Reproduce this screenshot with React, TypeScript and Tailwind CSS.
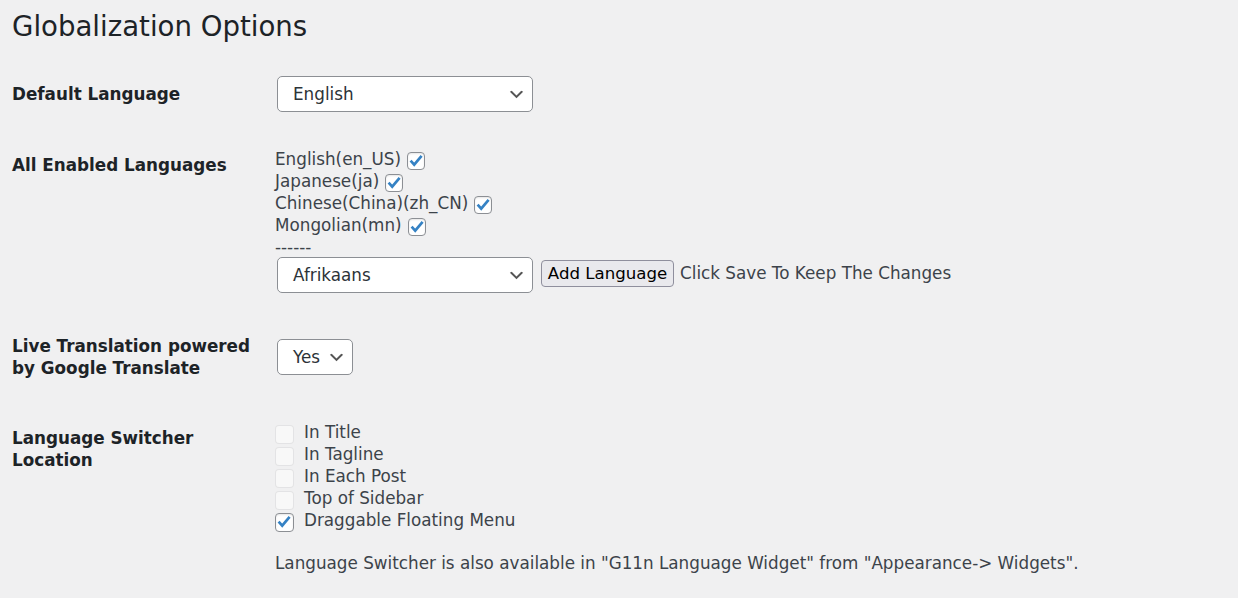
import React from "react";

function Chevron() {
  return (
    <svg width="19" height="19" viewBox="0 0 20 20" className="shrink-0">
      <path d="M5 6l5 5 5-5 2 1-7 7-7-7 2-1z" fill="#555" />
    </svg>
  );
}

function Select({ label, wide }: { label: string; wide: boolean }) {
  return (
    <div
      className={
        wide
          ? "ml-[2px] flex h-[36px] w-[256px] shrink-0 items-center justify-between rounded-[5px] border border-[#8c8f94] bg-white pl-[15px] pr-[6px] text-[#2c3338]"
          : "ml-[2px] flex h-[36px] w-[76px] shrink-0 items-center justify-between rounded-[5px] border border-[#8c8f94] bg-white pl-[15px] pr-[6px] text-[#2c3338]"
      }
    >
      <span>{label}</span>
      <Chevron />
    </div>
  );
}

function Check() {
  return (
    <svg viewBox="0 0 18 18" className="-ml-px -mt-px h-[18px] w-[18px] shrink-0 overflow-visible">
      <path d="M3.6 8.6 L7.2 12.6 L14.6 3.8" fill="none" stroke="#3582c4" strokeWidth="2.7" strokeLinecap="butt" strokeLinejoin="miter" />
    </svg>
  );
}

function LangBox() {
  return (
    <span className="ml-[6px] mt-[4px] flex h-[18px] w-[18px] shrink-0 items-start overflow-visible rounded-[4px] border border-[#8c8f94] bg-white shadow-[inset_0_1px_2px_rgba(0,0,0,0.1)]">
      <Check />
    </span>
  );
}

function SwitchBox({ checked }: { checked: boolean }) {
  return checked ? (
    <span className="mt-[4px] flex h-[19px] w-[19px] shrink-0 items-start overflow-visible rounded-[4px] border border-[#8c8f94] bg-white shadow-[inset_0_1px_2px_rgba(0,0,0,0.1)]">
      <Check />
    </span>
  ) : (
    <span className="mt-[4px] flex h-[19px] w-[19px] shrink-0 rounded-[4px] border border-[rgba(220,220,222,0.75)] bg-[rgba(255,255,255,0.5)]" />
  );
}

const langs = ["English(en_US)", "Japanese(ja)", "Chinese(China)(zh_CN)", "Mongolian(mn)"];
const spots: [string, boolean][] = [
  ["In Title", false],
  ["In Tagline", false],
  ["In Each Post", false],
  ["Top of Sidebar", false],
  ["Draggable Floating Menu", true],
];

export default function App() {
  return (
    <div className="min-h-[598px] bg-[#f0f0f1] pl-[12px] pt-[9px] font-['DejaVu_Sans',sans-serif] text-[16.8px] leading-[22px] text-[#3c434a]">
      <h1 className="text-[27.6px] font-normal leading-[36px] text-[#1d2327]">Globalization Options</h1>

      <div className="mt-[31px] flex">
        <div className="w-[263px] shrink-0 pt-[7px] font-bold text-[#1d2327]">
          <div className="w-[240px]">Default Language</div>
        </div>
        <div className="flex">
          <Select label="English" wide={true} />
        </div>
      </div>

      <div className="mt-[36px] flex">
        <div className="w-[263px] shrink-0 pt-[6px] font-bold text-[#1d2327]">
          <div className="w-[240px]">All Enabled Languages</div>
        </div>
        <div className="flex flex-col">
          {langs.map((l) => (
            <div key={l} className="flex h-[22px] items-start">
              <span>{l}</span>
              <LangBox />
            </div>
          ))}
          <div className="h-[22px]">------</div>
          <div className="-mt-px flex items-start">
            <Select label="Afrikaans" wide={true} />
            <button className="ml-[8px] mt-[3px] flex h-[27px] w-[133px] shrink-0 items-center justify-center rounded-[4px] border border-[#8f8f9d] bg-[#e9e9ed] pt-[2px] text-[16.6px] leading-none text-black">
              Add Language
            </button>
            <span className="ml-[6px] mt-[5px]">Click Save To Keep The Changes</span>
          </div>
        </div>
      </div>

      <div className="mt-[42px] flex">
        <div className="w-[263px] shrink-0 font-bold text-[#1d2327]">
          <div className="w-[240px]">Live Translation powered by Google Translate</div>
        </div>
        <div className="flex pt-[4px]">
          <Select label="Yes" wide={false} />
        </div>
      </div>

      <div className="mt-[42px] flex">
        <div className="w-[263px] shrink-0 pt-[6px] font-bold text-[#1d2327]">
          <div className="w-[240px]">Language Switcher Location</div>
        </div>
        <div className="flex flex-col">
          {spots.map(([t, c]) => (
            <div key={t} className="flex h-[22px] items-start">
              <SwitchBox checked={c} />
              <span className="ml-[10px]">{t}</span>
            </div>
          ))}
          <div className="mt-[21px]">
            Language Switcher is also available in "G11n Language Widget" from "Appearance-&gt; Widgets".
          </div>
        </div>
      </div>
    </div>
  );
}
